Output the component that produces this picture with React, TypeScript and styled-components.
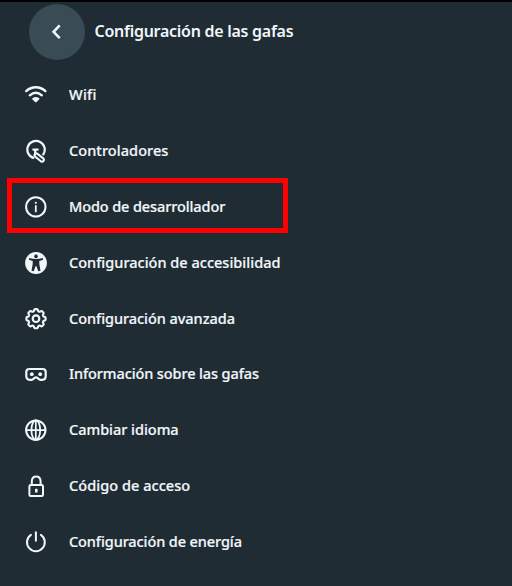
import React from 'react';
import styled, { createGlobalStyle } from 'styled-components';

const GlobalStyle = createGlobalStyle`
  * { box-sizing: border-box; }
  body { margin: 0; background: #1f2c34; }
`;

const Screen = styled.main`
  width: 512px;
  height: 586px;
  overflow: hidden;
  border-top: 2px solid #000;
  background: #1f2c34;
  color: #f2f7fa;
  font-family: 'Noto Sans', 'Open Sans', sans-serif;
`;

const Header = styled.header`
  display: flex;
  align-items: center;
  height: 65px;
  padding: 0 0 6px 28.5px;
`;

const BackButton = styled.button`
  display: flex;
  align-items: center;
  justify-content: center;
  width: 56px;
  height: 56px;
  padding: 0;
  border: 0;
  border-radius: 50%;
  background: #394b54;
  color: #fff;
`;

const Title = styled.h1<{ $tracking: number }>`
  margin: 0 0 0 10px;
  padding-bottom: 2px;
  font-size: 16px;
  font-weight: 600;
  line-height: 24px;
  white-space: nowrap;
  letter-spacing: ${(p) => p.$tracking}px;
`;

const List = styled.ul`
  margin: 0;
  padding: 0;
  list-style: none;
`;

const Row = styled.li`
  position: relative;
  display: flex;
  align-items: center;
  gap: 21px;
  height: 55.9px;
  padding-left: 24px;
`;

const Highlight = styled.span`
  position: absolute;
  left: 7px;
  top: -0.8px;
  width: 281px;
  height: 55px;
  border: 5px solid #fe0000;
`;

const Label = styled.span<{ $tracking: number }>`
  padding-bottom: 2px;
  font-size: 14.5px;
  font-weight: 500;
  line-height: 20px;
  white-space: nowrap;
  letter-spacing: ${(p) => p.$tracking}px;
  -webkit-text-stroke: 0.2px #f2f7fa;
`;

const Icon = styled.svg`
  flex: none;
  display: block;
  width: 24px;
  height: 24px;
  fill: none;
  stroke: #f2f7fa;
  stroke-width: 2;
  stroke-linecap: round;
  stroke-linejoin: round;
`;

const gearPath =
  Array.from({ length: 120 }, (_, i) => {
    const a = (i / 120) * Math.PI * 2;
    const r = 8.6 + 1 * Math.tanh(2.4 * (Math.cos(8 * a) + 0.25));
    return `${i ? 'L' : 'M'}${(12 + r * Math.cos(a)).toFixed(2)} ${(11.7 + r * Math.sin(a)).toFixed(2)}`;
  }).join('') + 'Z';

const icons = {
  wifi: (
    <>
      <path d="M2.2 8.1C7.8 3 15.8 3 21.4 8.1" strokeWidth="2.4" />
      <path d="M5.8 12.3C9.5 9.1 14.1 9.1 17.8 12.3" strokeWidth="2.4" />
      <path d="M9.2 15.9Q11.8 14.2 14.4 15.9L11.8 18.4Z" fill="#f2f7fa" strokeWidth="2" />
    </>
  ),
  controller: (
    <>
      <path d="M9.4 18.9A8.7 8.7 0 1 1 19.3 15.4" strokeWidth="2.2" />
      <path d="M9.3 10.6H13.7M11.2 10.6V15.6" strokeWidth="2.2" />
      <path d="M13.2 14.6L19.5 19.6A1.9 1.9 0 0 1 17.2 22.5L11 17.4A1.8 1.8 0 0 1 13.2 14.6Z" strokeWidth="2" />
    </>
  ),
  info: (
    <>
      <circle cx="11.8" cy="11.9" r="9.7" />
      <path d="M11.8 11V16.4" strokeWidth="1.8" />
      <circle cx="11.8" cy="7.8" r="1.1" fill="#f2f7fa" stroke="none" />
    </>
  ),
  accessibility: (
    <>
      <circle cx="12" cy="12" r="10.9" fill="#f2f7fa" stroke="none" />
      <g fill="#1f2c34" stroke="none">
        <circle cx="12" cy="5.4" r="1.8" />
        <path d="M5.2 7Q12 8.9 18.8 7L19.1 8.8L15.3 10.1V13L16.5 19.8L14.3 20.2L12.5 15.3H11.5L9.7 20.2L7.5 19.8L8.7 13V10.1L4.9 8.8Z" />
      </g>
    </>
  ),
  gear: (
    <>
      <path d={gearPath} strokeWidth="2.1" />
      <circle cx="12" cy="11.7" r="3.3" strokeWidth="2.2" />
    </>
  ),
  headset: (
    <>
      <path
        d="M5.3 7H18.7Q21.7 7 21.7 10V14Q21.7 17.8 18.2 17.8H16.6Q15.3 17.8 14.4 16.8L13.4 15.9Q12 14.8 10.6 15.9L9.6 16.8Q8.7 17.8 7.4 17.8H5.8Q2.3 17.8 2.3 14V10Q2.3 7 5.3 7Z"
        strokeWidth="2.2"
      />
      <g fill="#f2f7fa" stroke="none">
        <circle cx="7.8" cy="12.2" r="1.9" />
        <circle cx="16.2" cy="12.2" r="1.9" />
      </g>
    </>
  ),
  globe: (
    <>
      <circle cx="11.8" cy="12.1" r="9.7" />
      <ellipse cx="11.8" cy="12.1" rx="4.4" ry="9.7" strokeWidth="1.8" />
      <path d="M2.1 12.1H21.5M11.8 2.4V21.8" strokeWidth="1.7" />
    </>
  ),
  lock: (
    <>
      <rect x="5.4" y="11.1" width="13.6" height="11" rx="1.3" />
      <path d="M7.8 11V7.1Q8.2 2.6 12.2 2.6Q16.2 2.6 16.6 7.1V11" />
      <rect x="11" y="14.8" width="2.6" height="3.8" rx=".6" fill="#f2f7fa" stroke="none" />
    </>
  ),
  power: (
    <>
      <path d="M6.9 4.9A8.9 8.9 0 1 0 16.9 4.9" />
      <path d="M11.9 2.2V10.7" />
    </>
  ),
};

type Entry = { icon: keyof typeof icons; label: string; tracking: number; highlighted?: boolean };

const entries: Entry[] = [
  { icon: 'wifi', label: 'Wifi', tracking: 0.25 },
  { icon: 'controller', label: 'Controladores', tracking: 0.06 },
  { icon: 'info', label: 'Modo de desarrollador', tracking: -0.11, highlighted: true },
  { icon: 'accessibility', label: 'Configuración de accesibilidad', tracking: 0.01 },
  { icon: 'gear', label: 'Configuración avanzada', tracking: -0.05 },
  { icon: 'headset', label: 'Información sobre las gafas', tracking: -0.11 },
  { icon: 'globe', label: 'Cambiar idioma', tracking: -0.03 },
  { icon: 'lock', label: 'Código de acceso', tracking: 0.05 },
  { icon: 'power', label: 'Configuración de energía', tracking: -0.1 },
];

export default function App() {
  return (
    <Screen>
      <GlobalStyle />
      <Header>
        <BackButton aria-label="Volver">
          <Icon viewBox="0 0 24 24">
            <path d="M14.7 5.4L8.6 11.8L14.7 18.2" strokeWidth="2.6" strokeLinecap="butt" strokeLinejoin="miter" />
          </Icon>
        </BackButton>
        <Title $tracking={-0.27}>Configuración de las gafas</Title>
      </Header>
      <List>
        {entries.map((e) => (
          <Row key={e.label}>
            <Icon viewBox="0 0 24 24">{icons[e.icon]}</Icon>
            <Label $tracking={e.tracking}>{e.label}</Label>
            {e.highlighted && <Highlight />}
          </Row>
        ))}
      </List>
    </Screen>
  );
}
